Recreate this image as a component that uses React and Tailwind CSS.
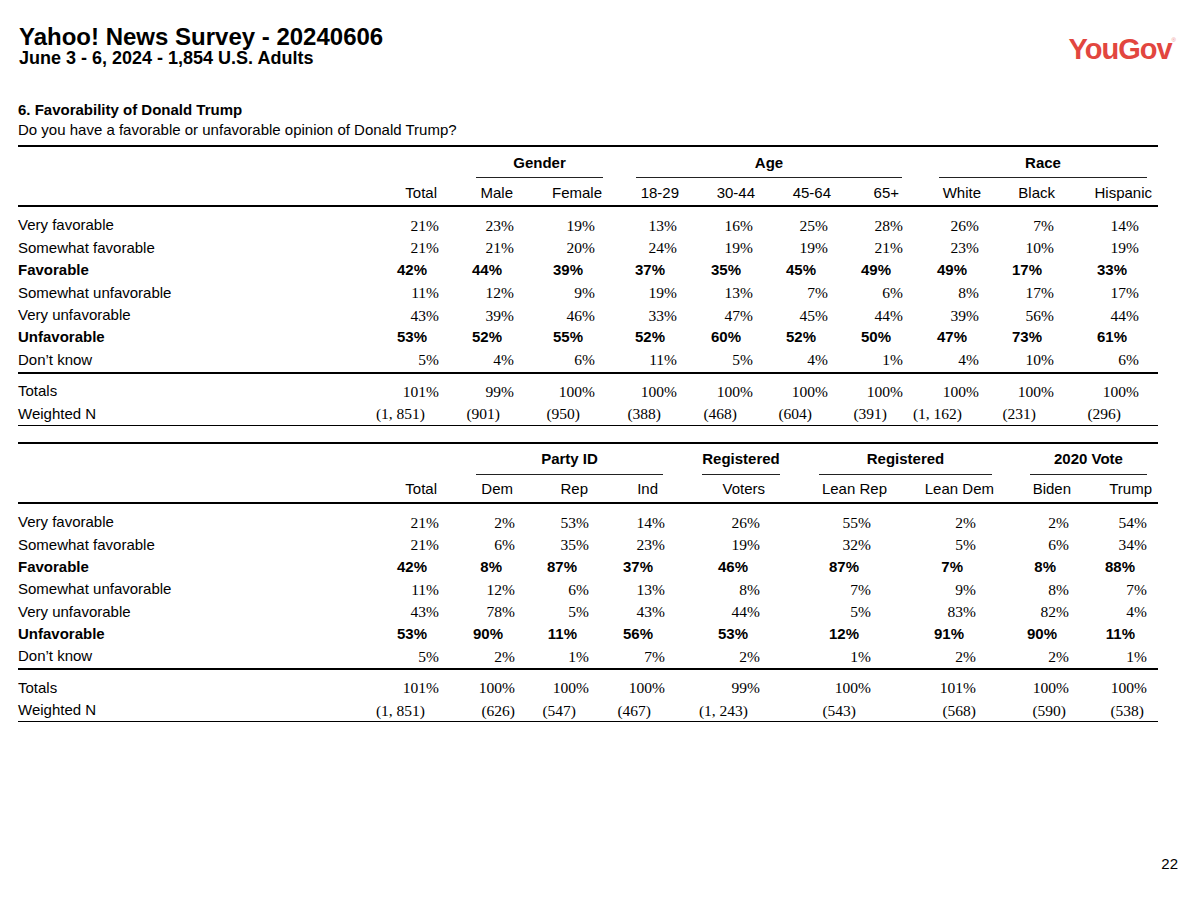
import React from 'react';

const sans = "font-['Liberation_Sans',Arial,sans-serif]";
const serif = "font-['Liberation_Serif','Times_New_Roman',serif]";

const labels = [
  { t: 'Very favorable' },
  { t: 'Somewhat favorable' },
  { t: 'Favorable', b: true },
  { t: 'Somewhat unfavorable' },
  { t: 'Very unfavorable' },
  { t: 'Unfavorable', b: true },
  { t: 'Don’t know' },
];

const table1 = {
  grid: 'grid-cols-[322px_99px_75px_81px_82px_76px_75px_75px_76px_75px_85px_1fr]',
  groups: [
    { label: 'Gender', pos: 'col-start-3 col-span-2 ml-[37px] -mr-[8px]' },
    { label: 'Age', pos: 'col-start-5 col-span-4 ml-[41px] mr-[1px]' },
    { label: 'Race', pos: 'col-start-9 col-span-3 ml-[36px] -mr-[8px]' },
  ],
  heads: [
    ['Total', 'mr-[2px]'],
    ['Male', 'mr-[1px]'],
    ['Female', '-mr-[7px]'],
    ['18-29', '-mr-[2px]'],
    ['30-44', '-mr-[2px]'],
    ['45-64', '-mr-[3px]'],
    ['65+', 'mr-[4px]'],
    ['White', '-mr-[2px]'],
    ['Black', '-mr-[1px]'],
    ['Hispanic', '-mr-[13px]'],
  ],
  rows: [
    ['21', '23', '19', '13', '16', '25', '28', '26', '7', '14'],
    ['21', '21', '20', '24', '19', '19', '21', '23', '10', '19'],
    ['42', '44', '39', '37', '35', '45', '49', '49', '17', '33'],
    ['11', '12', '9', '19', '13', '7', '6', '8', '17', '17'],
    ['43', '39', '46', '33', '47', '45', '44', '39', '56', '44'],
    ['53', '52', '55', '52', '60', '52', '50', '47', '73', '61'],
    ['5', '4', '6', '11', '5', '4', '1', '4', '10', '6'],
  ],
  totals: ['101', '99', '100', '100', '100', '100', '100', '100', '100', '100'],
  wn: [
    ['(1, 851)', 'mr-[14px]'],
    ['(901)', 'mr-[14px]'],
    ['(950)', 'mr-[15px]'],
    ['(388)', 'mr-[16px]'],
    ['(468)', 'mr-[16px]'],
    ['(604)', 'mr-[16px]'],
    ['(391)', 'mr-[16px]'],
    ['(1, 162)', 'mr-[17px]'],
    ['(231)', 'mr-[18px]'],
    ['(296)', 'mr-[18px]'],
  ],
};

const table2 = {
  grid: 'grid-cols-[322px_99px_76px_74px_76px_95px_111px_105px_93px_78px_1fr]',
  groups: [
    { label: 'Party ID', pos: 'col-start-3 col-span-3 ml-[37px] mr-[2px]' },
    { label: 'Registered', pos: 'col-start-6 col-span-1 ml-[37px] -mr-[20px]' },
    { label: 'Registered', pos: 'col-start-7 col-span-2 ml-[59px] -mr-[16px]' },
    { label: '2020 Vote', pos: 'col-start-9 col-span-2 ml-[54px] mr-[0px]' },
  ],
  heads: [
    ['Total', 'mr-[2px]'],
    ['Dem', 'mr-[2px]'],
    ['Rep', 'mr-[1px]'],
    ['Ind', 'mr-[7px]'],
    ['Voters', '-mr-[5px]'],
    ['Lean Rep', '-mr-[16px]'],
    ['Lean Dem', '-mr-[18px]'],
    ['Biden', '-mr-[2px]'],
    ['Trump', '-mr-[5px]'],
  ],
  rows: [
    ['21', '2', '53', '14', '26', '55', '2', '2', '54'],
    ['21', '6', '35', '23', '19', '32', '5', '6', '34'],
    ['42', '8', '87', '37', '46', '87', '7', '8', '88'],
    ['11', '12', '6', '13', '8', '7', '9', '8', '7'],
    ['43', '78', '5', '43', '44', '5', '83', '82', '4'],
    ['53', '90', '11', '56', '53', '12', '91', '90', '11'],
    ['5', '2', '1', '7', '2', '1', '2', '2', '1'],
  ],
  totals: ['101', '100', '100', '100', '99', '100', '101', '100', '100'],
  wn: [
    ['(1, 851)', 'mr-[14px]'],
    ['(626)', 'mr-[0px]'],
    ['(547)', 'mr-[13px]'],
    ['(467)', 'mr-[14px]'],
    ['(1, 243)', 'mr-[12px]'],
    ['(543)', 'mr-[15px]'],
    ['(568)', 'mr-[0px]'],
    ['(590)', 'mr-[3px]'],
    ['(538)', 'mr-[3px]'],
  ],
};

const Crosstab = ({ t }) => (
  <div className="border-t-2 border-black">
    {/* group headers */}
    <div className={`grid ${t.grid} pt-[5px]`}>
      {t.groups.map((g, i) => (
        <div key={i} className={`${g.pos} flex flex-col`}>
          <div className={`h-[22px] flex items-center justify-center font-bold text-[15px] ${sans}`}>{g.label}</div>
          <div className="mt-[3px] h-px bg-[#222]" />
        </div>
      ))}
    </div>

    {/* column headers */}
    <div className={`grid ${t.grid} pt-[4px] pb-[1px] border-b-2 border-black`}>
      <div />
      {t.heads.map(([h, off]) => (
        <div key={h} className="h-[22px] flex items-center justify-end">
          <span className={`${off} text-[15px] ${sans}`}>{h}</span>
        </div>
      ))}
    </div>

    {/* body */}
    <div className="pt-[7px] pb-[1px] border-b-2 border-black">
      {t.rows.map((r, i) => (
        <div key={i} className={`grid ${t.grid} h-[22.4px] items-center`}>
          <div className={`text-[15px] ${sans} ${labels[i].b ? 'font-bold' : ''}`}>{labels[i].t}</div>
          {r.map((v, j) => (
            <div key={j} className="flex justify-end">
              {labels[i].b ? (
                <span className={`${v.length === 1 ? 'mr-[13px]' : 'mr-[12px]'} font-bold text-[15px] ${sans}`}>{v}%</span>
              ) : (
                <span className={`text-[15.5px] ${serif}`}>{v}%</span>
              )}
            </div>
          ))}
        </div>
      ))}
    </div>

    {/* totals */}
    <div className="pt-[6px] border-b-[1.5px] border-black">
      <div className={`grid ${t.grid} h-[22.5px] items-center`}>
        <div className={`text-[15px] ${sans}`}>Totals</div>
        {t.totals.map((v, j) => (
          <div key={j} className="flex justify-end">
            <span className={`text-[15.5px] ${serif}`}>{v}%</span>
          </div>
        ))}
      </div>
      <div className={`grid ${t.grid} h-[22.5px] items-center`}>
        <div className={`text-[15px] ${sans}`}>Weighted N</div>
        {t.wn.map(([v, off], j) => (
          <div key={j} className="flex justify-end">
            <span className={`${off} whitespace-pre text-[15.5px] ${serif}`}>{v}</span>
          </div>
        ))}
      </div>
    </div>
  </div>
);

const App = () => {
  return (
    <div className="w-[1200px] min-h-[899px] bg-white text-black">
      {/* header */}
      <div className="flex justify-between pl-[19px] pr-[24px]">
        <div>
          <h1 className={`pt-[25px] text-[24px] leading-[24px] font-bold ${sans}`}>Yahoo! News Survey - 20240606</h1>
          <h2 className={`text-[18px] leading-[18px] font-bold ${sans}`}>June 3 - 6, 2024 - 1,854 U.S. Adults</h2>
        </div>
        <div className={`mt-[35px] flex items-start text-[#e2463f] ${sans}`}>
          <span className="text-[29px] leading-[28px] font-bold tracking-[-1px]">YouGov</span>
          <span className="text-[6px] leading-[6px] mt-[2px] text-[#e88]">®</span>
        </div>
      </div>

      <div className="pl-[18px] pr-[42px]">
        <div className={`mt-[33px] text-[15px] leading-[20px] font-bold ${sans}`}>6. Favorability of Donald Trump</div>
        <div className={`text-[15px] leading-[20px] ${sans}`}>Do you have a favorable or unfavorable opinion of Donald Trump?</div>

        <div className="mt-[5px]">
          <Crosstab t={table1} />
        </div>
        <div className="mt-[16px]">
          <Crosstab t={table2} />
        </div>
      </div>

      <div className={`flex justify-end pr-[22px] mt-[132px] text-[15px] leading-[20px] ${sans}`}>22</div>
    </div>
  );
};

export default App;
